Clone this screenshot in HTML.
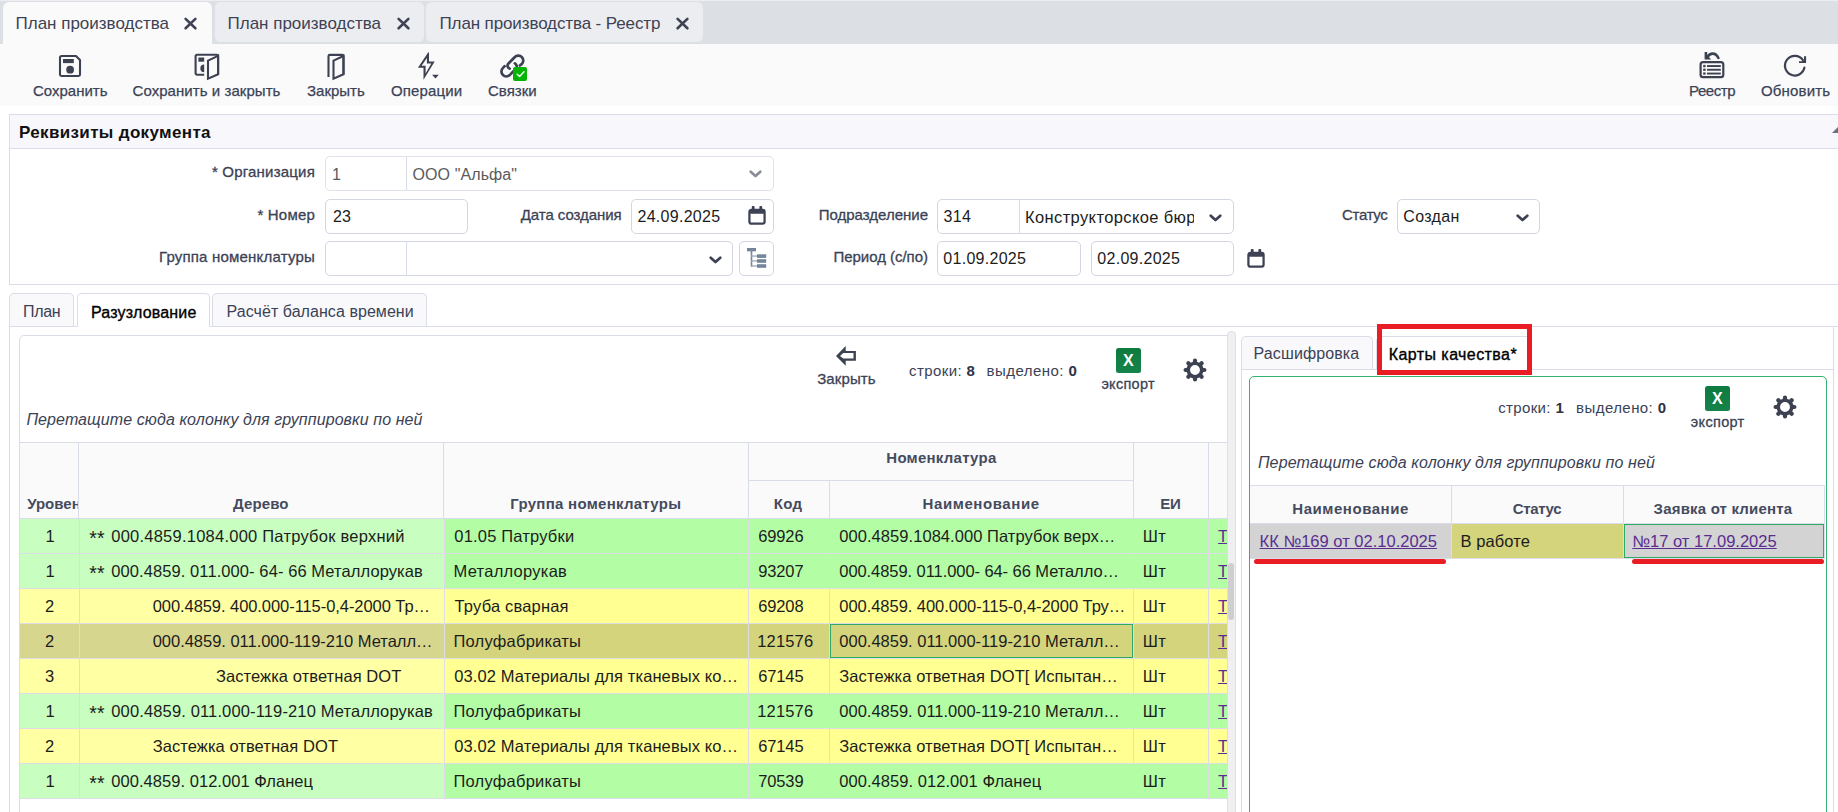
<!DOCTYPE html>
<html lang="ru">
<head>
<meta charset="utf-8">
<title>План производства</title>
<style>
*{box-sizing:border-box;margin:0;padding:0}
html,body{width:1838px;height:812px;overflow:hidden;background:#fff}
body{position:relative;font-family:"Liberation Sans",sans-serif;color:#3b4255;font-size:15px;-webkit-font-smoothing:antialiased}
.abs{position:absolute}
svg{display:block;position:absolute;overflow:visible}

/* ---------- top tab bar ---------- */
#tabbar{position:absolute;left:0;top:0;width:1838px;height:44px;background:#dcdfe4;border-top:1px solid #eceef1}
.wtab{position:absolute;top:1px;height:39.8px;background:#ecedf1;border-radius:5.5px;font-size:17px;line-height:20px;color:#3e4254;white-space:nowrap}
.wtab.active{background:#fafafa;height:43px;border-radius:6px 6px 0 0}
.wtab span{position:absolute;top:12px}
.wtab svg{top:15px}

/* ---------- toolbar ---------- */
#toolbar{position:absolute;left:0;top:44px;width:1838px;height:61.5px;background:#fafafa}
.tbtn{position:absolute;top:0;height:61px;text-align:center;white-space:nowrap}
.tbtn .lbl{position:absolute;left:0;top:38px;font-size:15px;line-height:18px;color:#3b4255;-webkit-text-stroke:.25px #3b4255}

/* ---------- requisites panel ---------- */
#req{position:absolute;left:9px;top:114px;width:1840px;height:171px;border:1px solid #d9dce9;background:#fff}
#req .hd{position:absolute;left:0;top:0;width:100%;height:34px;background:#f8f8fc;border-bottom:1px solid #d9dce9}
#req .hd b{position:absolute;left:9px;top:8px;font-size:17px;line-height:20px;color:#111;letter-spacing:.35px}
.flabel{position:absolute;font-size:15px;line-height:18px;color:#3b4255;text-align:right;white-space:nowrap;-webkit-text-stroke:.3px #3b4255;letter-spacing:.2px}
.inp{position:absolute;height:35px;border:1px solid #d3d6e4;border-radius:5px;background:#fff;font-size:16px;line-height:20px;color:#1c1c1c;white-space:nowrap;overflow:hidden}
.inp.dis{border-color:#e0e2ec;color:#5a5a5a}
.inp .t{position:absolute;top:7px}
.inp .dv{position:absolute;top:0;width:1px;height:100%;background:#d9dce9}

/* ---------- sub tabs ---------- */
.stab{position:absolute;height:33px;border:1px solid #d9dce9;border-bottom:none;border-radius:5px 5px 0 0;background:#f9f9fb;font-size:16px;line-height:20px;color:#3b4255;white-space:nowrap}
.stab.active{background:#fff;color:#000;height:34px;-webkit-text-stroke:.35px #000}
.stab span{position:absolute;top:8px}

/* ---------- grids ---------- */
.gridpanel{position:absolute;border:1px solid #d9dce9;border-radius:5px;background:#fff}
.drag{position:absolute;font-style:italic;font-size:16px;line-height:20px;color:#3b4255;white-space:nowrap}
.cnt{position:absolute;font-size:15px;line-height:18px;color:#3b4255;white-space:nowrap}
.cnt b{color:#2d3345}
.small-lbl{position:absolute;font-size:15px;line-height:18px;color:#3b4255;white-space:nowrap;-webkit-text-stroke:.3px #3b4255}
.xl{position:absolute;width:25px;height:25px;border-radius:2.5px;background:linear-gradient(#0f7a40,#15844a);color:#fff;font-weight:700;font-size:16px;line-height:25px;text-align:center}
.th{position:absolute;background:#fafafa;border-right:1px solid #d9dce9;border-top:1px solid #d9dce9;border-bottom:1px solid #d9dce9;font-size:15px;line-height:18px;font-weight:700;color:#454b5e;white-space:nowrap;overflow:hidden}
.th span{position:absolute;left:0}
.row{position:absolute;left:0;height:35px;font-size:16.5px;line-height:20px;color:#1c1c1c;white-space:nowrap}
.c{position:absolute;top:0;height:35px;border-right:1px solid #dcdde6;border-bottom:1px solid #dcdde6;overflow:hidden}
.c span{position:absolute;top:7px;left:0}
.focus{position:absolute;left:0;top:0;right:0;bottom:0;border:1px solid #2fa968}
.g .c{background:#b3fda5}.g .c.f{background:#c8febf}
.y .c{background:#ffff92}.y .c.f{background:#ffffa3}
.s .c{background:#d4d47d}.s .c.f{background:#d7d68f}
a{color:#5a2d91;text-decoration:underline}
</style>
</head>
<body>

<!-- ================= window tabs ================= -->
<div id="tabbar">
  <div class="wtab active" style="left:3px;width:209px"><span style="left:12.5px">План производства</span>
    <svg style="left:181px" width="13" height="13" viewBox="0 0 13 13"><path d="M1.6 1.9 L11.4 11.3 M11.4 1.9 L1.6 11.3" stroke="#3e4254" stroke-width="2.6" stroke-linecap="round"/></svg></div>
  <div class="wtab" style="left:214.5px;width:209px"><span style="left:13px">План производства</span>
    <svg style="left:182.6px" width="13" height="13" viewBox="0 0 13 13"><path d="M1.6 1.9 L11.4 11.3 M11.4 1.9 L1.6 11.3" stroke="#3e4254" stroke-width="2.6" stroke-linecap="round"/></svg></div>
  <div class="wtab" style="left:426px;width:277px"><span style="left:13.5px;letter-spacing:-.12px">План производства - Реестр</span>
    <svg style="left:250.2px" width="13" height="13" viewBox="0 0 13 13"><path d="M1.6 1.9 L11.4 11.3 M11.4 1.9 L1.6 11.3" stroke="#3e4254" stroke-width="2.6" stroke-linecap="round"/></svg></div>
</div>

<!-- ================= toolbar ================= -->
<div id="toolbar">
  <div class="tbtn" style="left:33px;width:74px"><svg style="left:26px;top:11px" width="22" height="22" viewBox="0 0 22 22"><path d="M2.4 1 H17 L21 5 V19.6 a1.4 1.4 0 0 1 -1.4 1.4 H2.4 a1.4 1.4 0 0 1 -1.4 -1.4 V2.4 a1.4 1.4 0 0 1 1.4 -1.4 Z" fill="none" stroke="#3d4252" stroke-width="2.1" stroke-linejoin="round"/><rect x="4" y="4" width="10.8" height="4.1" fill="#3d4252"/><circle cx="11.1" cy="14.7" r="3.9" fill="#3d4252"/></svg><span class="lbl">Сохранить</span></div>
  <div class="tbtn" style="left:132.5px;width:148px"><svg style="left:61.5px;top:9px" width="27" height="27" viewBox="0 0 27 27"><path d="M10.2 21.7 H3 a1.4 1.4 0 0 1 -1.4 -1.4 V3.2 a1.4 1.4 0 0 1 1.4 -1.4 H22.7 a1.4 1.4 0 0 1 1.4 1.4 V21.2" fill="none" stroke="#3d4252" stroke-width="2.1"/><path d="M14 7.6 L24.1 2.9 V21.2 L14 25.6 Z" fill="none" stroke="#3d4252" stroke-width="2.1" stroke-linejoin="miter"/><rect x="4.4" y="4.5" width="5.8" height="4.2" fill="#3d4252"/><path d="M10.2 11.4 A3.9 3.9 0 0 0 10.2 19.2 Z" fill="#3d4252"/></svg><span class="lbl" style="letter-spacing:.06px">Сохранить и закрыть</span></div>
  <div class="tbtn" style="left:307px;width:58px"><svg style="left:19px;top:9px" width="20" height="27" viewBox="0 0 20 27"><path d="M2.5 24 V3.3 a1.4 1.4 0 0 1 1.4 -1.4 H16.1 a1.4 1.4 0 0 1 1.4 1.4 V21.2" fill="none" stroke="#3d4252" stroke-width="2.1"/><path d="M7.5 7.6 L17.5 3 V21.2 L7.5 25.6 Z" fill="none" stroke="#3d4252" stroke-width="2.1"/></svg><span class="lbl">Закрыть</span></div>
  <div class="tbtn" style="left:391px;width:70px"><svg style="left:26px;top:8px" width="23" height="29" viewBox="0 0 23 29"><path fill-rule="evenodd" fill="#3d4252" d="M11.3 0.2 L12 0.4 V9.6 H17.7 L6.5 27.8 V15.8 H0.9 Z M9.9 6 V11.6 H14.3 L8.6 21.4 V13.8 H4.6 Z"/><path d="M15.1 22.8 H21.8 L18.45 26.6 Z" fill="#3d4252"/></svg><span class="lbl" style="letter-spacing:.12px">Операции</span></div>
  <div class="tbtn" style="left:488px;width:48px"><svg style="left:0;top:0" width="48" height="40" viewBox="488 44 48 40"><g fill="none" stroke="#3d4252" stroke-width="2.9" stroke-linecap="round" transform="translate(512.6 66) scale(.93) translate(-512.6 -66)"><path d="M509.5 68.8 C507 67.5 506.3 65.5 508.2 63.3 L514.5 56.8 C517 54.3 520.5 54.3 522.6 56.5 C524.7 58.8 524.5 62 522.3 64 L520.4 65.5"/><path d="M504 66.2 L502.3 68 C500 70.3 500 73.6 502.2 75.6 C504.4 77.7 507.7 77.6 510 75.3 L516 69 C517.8 67 517.3 64.6 515 63.2"/></g><rect x="513" y="67" width="14" height="14" rx="2" fill="#05b305"/><path d="M517.2 74.2 L519.6 76.5 L524 71.8" fill="none" stroke="#eafbe8" stroke-width="1.5" stroke-linecap="round" stroke-linejoin="round"/></svg><span class="lbl">Связки</span></div>
  <div class="tbtn" style="left:1689px;width:46px"><svg style="left:10px;top:7px" width="26" height="28" viewBox="0 0 26 28"><rect x="1.6" y="11.2" width="22.7" height="15" rx="2.5" fill="none" stroke="#3d4252" stroke-width="2.2"/><g fill="#3d4252"><rect x="8" y="14.1" width="13.8" height="1.9"/><rect x="8" y="17.8" width="13.8" height="1.9"/><rect x="8" y="21.6" width="13.8" height="1.9"/><rect x="4.2" y="13.9" width="2.4" height="2.3"/><rect x="4.2" y="17.6" width="2.4" height="2.3"/><rect x="4.2" y="21.4" width="2.4" height="2.3"/><path d="M5.6 1 H8.2 V4.2 L12.2 8.4 H5.6 Z"/></g><path d="M8.5 5.8 C11 1.8 16.5 1 19.4 7" fill="none" stroke="#3d4252" stroke-width="2.6" stroke-linecap="round"/></svg><span class="lbl" style="letter-spacing:-.43px">Реестр</span></div>
  <div class="tbtn" style="left:1761px;width:69px"><svg style="left:22px;top:9px" width="25" height="25" viewBox="0 0 25 25"><path d="M19.76 6.98 A9.8 9.8 0 1 0 21.42 14.57" fill="none" stroke="#3d4252" stroke-width="2.2" stroke-linecap="round"/><path d="M23.1 3.2 V10 H16 V8.2 H19.3 L21 6.5 V3.2 Z" fill="#3d4252"/></svg><span class="lbl" style="letter-spacing:.17px">Обновить</span></div>
</div>

<!-- ================= requisites ================= -->
<div id="req">
  <div class="hd"><b>Реквизиты документа</b></div>
  <svg style="left:1821.5px;top:10.5px" width="7" height="7" viewBox="0 0 7 7"><path d="M7 0V7H0Z" fill="#6b6f7b"/></svg>

  <div class="flabel" style="right:1533px;top:48px">* Организация</div>
  <div class="inp dis" style="left:315px;top:41px;width:449px"><span class="t" style="left:6px;top:8px">1</span><i class="dv" style="left:80px"></i><span class="t" style="left:86.5px;top:8px;letter-spacing:.1px">ООО "Альфа"</span>
    <svg style="left:423px;top:12.5px" width="13" height="8" viewBox="0 0 13 8"><path d="M1.7 1.7L6.5 6.1L11.3 1.7" fill="none" stroke="#8a8d97" stroke-width="2.7" stroke-linecap="round" stroke-linejoin="round"/></svg></div>

  <div class="flabel" style="right:1533px;top:90.5px">* Номер</div>
  <div class="inp" style="left:315px;top:84px;width:143px"><span class="t" style="left:7px">23</span></div>
  <div class="flabel" style="right:1226.5px;top:91px;letter-spacing:-.07px">Дата создания</div>
  <div class="inp" style="left:621px;top:84px;width:143px"><span class="t" style="left:5.5px;letter-spacing:.28px">24.09.2025</span>
    <svg style="left:116px;top:6px" width="18" height="19.2" viewBox="0 0 19 20"><rect x="1.5" y="4" width="16" height="14.5" rx="2" fill="none" stroke="#3e4254" stroke-width="2.4"/><rect x="1.5" y="3" width="16" height="5" rx="1.5" fill="#3e4254"/><rect x="4" y="0" width="3" height="5" rx="1" fill="#3e4254"/><rect x="12" y="0" width="3" height="5" rx="1" fill="#3e4254"/></svg></div>

  <div class="flabel" style="right:1533px;top:132.5px">Группа номенклатуры</div>
  <div class="inp" style="left:315px;top:126px;width:408px"><i class="dv" style="left:80px"></i>
    <svg style="left:383px;top:13.5px" width="13" height="8" viewBox="0 0 13 8"><path d="M1.7 1.7L6.5 6.1L11.3 1.7" fill="none" stroke="#3e4254" stroke-width="2.7" stroke-linecap="round" stroke-linejoin="round"/></svg></div>
  <div class="inp" style="left:729px;top:126px;width:35px">
    <svg style="left:7px;top:6px" width="20" height="21" viewBox="0 0 20 21"><g fill="#74859a"><rect x="0" y="0" width="9" height="3.3"/><rect x="3.7" y="3" width="1.6" height="15.8"/><rect x="4" y="7.4" width="7" height="1.3" fill="#9aa7b7"/><rect x="4" y="12.3" width="7" height="1.3" fill="#9aa7b7"/><rect x="4" y="17.3" width="7" height="1.3" fill="#9aa7b7"/><rect x="10" y="6.3" width="9.2" height="3.6"/><rect x="10" y="11.2" width="9.2" height="3.6"/><rect x="10" y="16.2" width="9.2" height="3.6"/></g></svg></div>

  <div class="flabel" style="right:920px;top:91px;letter-spacing:0">Подразделение</div>
  <div class="inp" style="left:927px;top:84px;width:297px"><span class="t" style="left:5.5px;letter-spacing:.4px">314</span><i class="dv" style="left:81px"></i><span class="t" style="left:87px;top:6.5px;width:168.5px;overflow:hidden;font-size:16.5px;letter-spacing:.38px">Конструкторское бюро</span>
    <svg style="left:270.5px;top:13.5px" width="13" height="8" viewBox="0 0 13 8"><path d="M1.7 1.7L6.5 6.1L11.3 1.7" fill="none" stroke="#3e4254" stroke-width="2.7" stroke-linecap="round" stroke-linejoin="round"/></svg></div>
  <div class="flabel" style="right:460.5px;top:91px;letter-spacing:-.34px">Статус</div>
  <div class="inp" style="left:1387px;top:84px;width:143px"><span class="t" style="left:5.3px;letter-spacing:.33px">Создан</span>
    <svg style="left:118px;top:13.5px" width="13" height="8" viewBox="0 0 13 8"><path d="M1.7 1.7L6.5 6.1L11.3 1.7" fill="none" stroke="#3e4254" stroke-width="2.7" stroke-linecap="round" stroke-linejoin="round"/></svg></div>

  <div class="flabel" style="right:920px;top:133px;letter-spacing:-.03px">Период (с/по)</div>
  <div class="inp" style="left:927px;top:126px;width:144px"><span class="t" style="left:5.3px;letter-spacing:.28px">01.09.2025</span></div>
  <div class="inp" style="left:1081px;top:126px;width:143px"><span class="t" style="left:5.3px;letter-spacing:.28px">02.09.2025</span></div>
  <svg style="left:1236.5px;top:134.2px" width="18" height="19.2" viewBox="0 0 19 20"><rect x="1.5" y="4" width="16" height="14.5" rx="2" fill="none" stroke="#3e4254" stroke-width="2.4"/><rect x="1.5" y="3" width="16" height="5" rx="1.5" fill="#3e4254"/><rect x="4" y="0" width="3" height="5" rx="1" fill="#3e4254"/><rect x="12" y="0" width="3" height="5" rx="1" fill="#3e4254"/></svg>
</div>

<!-- ================= sub tabs ================= -->
<div class="abs" style="left:9px;top:326px;width:1840px;height:500px;border-top:1px solid #d9dce9;border-left:1px solid #d9dce9"></div>
<div class="stab" style="left:9px;top:293px;width:65px"><span style="left:13px;letter-spacing:-.3px">План</span></div>
<div class="stab active" style="left:77px;top:293px;width:133px"><span style="left:13px;top:9.3px;letter-spacing:.17px">Разузлование</span></div>
<div class="stab" style="left:212px;top:293px;width:215px"><span style="left:13.5px;letter-spacing:.06px">Расчёт баланса времени</span></div>

<!-- ================= left grid ================= -->
<!-- LGRID-START -->
<div class="gridpanel" id="lgrid" style="left:19px;top:335px;width:1209px;height:500px;border-radius:5px 0 0 0">
 <svg style="left:815px;top:9px" width="22" height="22" viewBox="0 0 22 22"><path fill-rule="evenodd" fill="#3d4252" d="M1 11 L10.7 1 V5.9 H20.9 V15.8 H10.7 V20.7 Z M5 11 L8.3 8.1 H18.5 V13.6 H8.3 Z"/></svg>
 <div class="small-lbl" style="letter-spacing:0.107px;margin-left:0.20px;left:797px;top:34px">Закрыть</div>
 <div class="cnt" style="letter-spacing:0.409px;margin-left:0.00px;left:889px;top:26px">строки: <b>8</b></div>
 <div class="cnt" style="letter-spacing:0.470px;margin-left:-0.50px;left:967px;top:26px">выделено: <b>0</b></div>
 <div class="xl" style="left:1095.8px;top:11.9px">X</div>
 <div class="small-lbl" style="letter-spacing:0.297px;margin-left:-0.10px;left:1081.5px;top:38.6px;font-size:14.5px">экспорт</div>
 <svg style="left:1162.8px;top:21.8px" width="24" height="24" viewBox="0 0 24 24"><circle cx="12" cy="12" r="6.75" fill="none" stroke="#3d4252" stroke-width="3.6"/><path d="M20.00 12.00L21.40 12.00M17.66 17.66L18.65 18.65M12.00 20.00L12.00 21.40M6.34 17.66L5.35 18.65M4.00 12.00L2.60 12.00M6.34 6.34L5.35 5.35M12.00 4.00L12.00 2.60M17.66 6.34L18.65 5.35" stroke="#3d4252" stroke-width="4.2" stroke-linecap="round" fill="none"/></svg>
 <div class="drag" style="letter-spacing:0.095px;margin-left:0.40px;left:6px;top:74px">Перетащите сюда колонку для группировки по ней</div>
 <div class="th" style="left:0px;top:106px;width:59px;height:77px"><span style="letter-spacing:0.000px;margin-left:7.20px;top:51.5px">Уровень</span></div>
 <div class="th" style="left:59px;top:106px;width:365px;height:77px"><span style="letter-spacing:0.112px;margin-left:154.00px;top:51.5px">Дерево</span></div>
 <div class="th" style="left:424px;top:106px;width:305px;height:77px"><span style="letter-spacing:0.273px;margin-left:66.30px;top:51.5px">Группа номенклатуры</span></div>
 <div class="th" style="left:729px;top:106px;width:385px;height:39px"><span style="letter-spacing:0.247px;margin-left:137.30px;top:5.5px">Номенклатура</span></div>
 <div class="th" style="left:729px;top:144px;width:81px;height:39px"><span style="letter-spacing:0.240px;margin-left:24.80px;top:13.5px">Код</span></div>
 <div class="th" style="left:810px;top:144px;width:304px;height:39px"><span style="letter-spacing:0.581px;margin-left:92.60px;top:13.5px">Наименование</span></div>
 <div class="th" style="left:1114px;top:106px;width:75px;height:77px"><span style="letter-spacing:-0.205px;margin-left:26.30px;top:51.5px">ЕИ</span></div>
 <div class="th" style="left:1189px;top:106px;width:19px;height:77px"><span style="top:53px"></span></div>
 <div class="row g" style="top:183px">
  <div class="c f" style="left:0px;width:60px"><span style="letter-spacing:0.000px;margin-left:25.40px">1</span></div>
  <div class="c f" style="left:60px;width:365px"><span style="letter-spacing:0.111px;margin-left:9.30px;font-size:19.5px;top:8.5px">**</span><span style="letter-spacing:0.234px;margin-left:31.25px">000.4859.1084.000 Патрубок верхний</span></div>
  <div class="c" style="left:425px;width:304px"><span style="letter-spacing:0.185px;margin-left:9.30px">01.05 Патрубки</span></div>
  <div class="c" style="left:729px;width:81px"><span style="letter-spacing:-0.152px;margin-left:9.30px">69926</span></div>
  <div class="c" style="left:810px;width:304px"><span style="letter-spacing:0.052px;margin-left:9.30px">000.4859.1084.000 Патрубок верх…</span></div>
  <div class="c" style="left:1114px;width:75px"><span style="letter-spacing:0.378px;margin-left:8.80px">Шт</span></div>
  <div class="c" style="left:1189px;width:19px"><span style="letter-spacing:0.000px;margin-left:9.10px"><a>Т</a></span></div>
 </div>
 <div class="row g" style="top:218px">
  <div class="c f" style="left:0px;width:60px"><span style="letter-spacing:0.000px;margin-left:25.40px">1</span></div>
  <div class="c f" style="left:60px;width:365px"><span style="letter-spacing:0.111px;margin-left:9.30px;font-size:19.5px;top:8.5px">**</span><span style="letter-spacing:0.086px;margin-left:31.25px">000.4859. 011.000- 64- 66 Металлорукав</span></div>
  <div class="c" style="left:425px;width:304px"><span style="letter-spacing:0.262px;margin-left:8.50px">Металлорукав</span></div>
  <div class="c" style="left:729px;width:81px"><span style="letter-spacing:-0.152px;margin-left:9.30px">93207</span></div>
  <div class="c" style="left:810px;width:304px"><span style="letter-spacing:-0.072px;margin-left:9.30px">000.4859. 011.000- 64- 66 Металло…</span></div>
  <div class="c" style="left:1114px;width:75px"><span style="letter-spacing:0.378px;margin-left:8.80px">Шт</span></div>
  <div class="c" style="left:1189px;width:19px"><span style="letter-spacing:0.000px;margin-left:9.10px"><a>Т</a></span></div>
 </div>
 <div class="row y" style="top:253px">
  <div class="c f" style="left:0px;width:60px"><span style="letter-spacing:0.000px;margin-left:25.10px">2</span></div>
  <div class="c f" style="left:60px;width:365px"><span style="letter-spacing:-0.066px;margin-left:72.70px">000.4859. 400.000-115-0,4-2000 Тр…</span></div>
  <div class="c" style="left:425px;width:304px"><span style="letter-spacing:0.185px;margin-left:9.50px">Труба сварная</span></div>
  <div class="c" style="left:729px;width:81px"><span style="letter-spacing:-0.152px;margin-left:9.30px">69208</span></div>
  <div class="c" style="left:810px;width:304px"><span style="letter-spacing:-0.045px;margin-left:9.30px">000.4859. 400.000-115-0,4-2000 Тру…</span></div>
  <div class="c" style="left:1114px;width:75px"><span style="letter-spacing:0.378px;margin-left:8.80px">Шт</span></div>
  <div class="c" style="left:1189px;width:19px"><span style="letter-spacing:0.000px;margin-left:9.10px"><a>Т</a></span></div>
 </div>
 <div class="row s" style="top:288px">
  <div class="c f" style="left:0px;width:60px"><span style="letter-spacing:0.000px;margin-left:25.10px">2</span></div>
  <div class="c f" style="left:60px;width:365px"><span style="letter-spacing:-0.027px;margin-left:72.70px">000.4859. 011.000-119-210 Металл…</span></div>
  <div class="c" style="left:425px;width:304px"><span style="letter-spacing:0.224px;margin-left:8.50px">Полуфабрикаты</span></div>
  <div class="c" style="left:729px;width:81px"><span style="letter-spacing:0.143px;margin-left:8.30px">121576</span></div>
  <div class="c" style="left:810px;width:304px"><span style="letter-spacing:-0.006px;margin-left:9.30px">000.4859. 011.000-119-210 Металл…</span><i class="focus"></i></div>
  <div class="c" style="left:1114px;width:75px"><span style="letter-spacing:0.378px;margin-left:8.80px">Шт</span></div>
  <div class="c" style="left:1189px;width:19px"><span style="letter-spacing:0.000px;margin-left:9.10px"><a>Т</a></span></div>
 </div>
 <div class="row y" style="top:323px">
  <div class="c f" style="left:0px;width:60px"><span style="letter-spacing:0.000px;margin-left:25.10px">3</span></div>
  <div class="c f" style="left:60px;width:365px"><span style="letter-spacing:0.068px;margin-left:136.00px">Застежка ответная DOT</span></div>
  <div class="c" style="left:425px;width:304px"><span style="letter-spacing:0.096px;margin-left:9.30px">03.02 Материалы для тканевых ко…</span></div>
  <div class="c" style="left:729px;width:81px"><span style="letter-spacing:-0.152px;margin-left:9.30px">67145</span></div>
  <div class="c" style="left:810px;width:304px"><span style="letter-spacing:0.079px;margin-left:9.30px">Застежка ответная DOT[ Испытан…</span></div>
  <div class="c" style="left:1114px;width:75px"><span style="letter-spacing:0.378px;margin-left:8.80px">Шт</span></div>
  <div class="c" style="left:1189px;width:19px"><span style="letter-spacing:0.000px;margin-left:9.10px"><a>Т</a></span></div>
 </div>
 <div class="row g" style="top:358px">
  <div class="c f" style="left:0px;width:60px"><span style="letter-spacing:0.000px;margin-left:25.40px">1</span></div>
  <div class="c f" style="left:60px;width:365px"><span style="letter-spacing:0.111px;margin-left:9.30px;font-size:19.5px;top:8.5px">**</span><span style="letter-spacing:0.141px;margin-left:31.25px">000.4859. 011.000-119-210 Металлорукав</span></div>
  <div class="c" style="left:425px;width:304px"><span style="letter-spacing:0.224px;margin-left:8.50px">Полуфабрикаты</span></div>
  <div class="c" style="left:729px;width:81px"><span style="letter-spacing:0.143px;margin-left:8.30px">121576</span></div>
  <div class="c" style="left:810px;width:304px"><span style="letter-spacing:-0.006px;margin-left:9.30px">000.4859. 011.000-119-210 Металл…</span></div>
  <div class="c" style="left:1114px;width:75px"><span style="letter-spacing:0.378px;margin-left:8.80px">Шт</span></div>
  <div class="c" style="left:1189px;width:19px"><span style="letter-spacing:0.000px;margin-left:9.10px"><a>Т</a></span></div>
 </div>
 <div class="row y" style="top:393px">
  <div class="c f" style="left:0px;width:60px"><span style="letter-spacing:0.000px;margin-left:25.10px">2</span></div>
  <div class="c f" style="left:60px;width:365px"><span style="letter-spacing:0.068px;margin-left:72.70px">Застежка ответная DOT</span></div>
  <div class="c" style="left:425px;width:304px"><span style="letter-spacing:0.096px;margin-left:9.30px">03.02 Материалы для тканевых ко…</span></div>
  <div class="c" style="left:729px;width:81px"><span style="letter-spacing:-0.152px;margin-left:9.30px">67145</span></div>
  <div class="c" style="left:810px;width:304px"><span style="letter-spacing:0.079px;margin-left:9.30px">Застежка ответная DOT[ Испытан…</span></div>
  <div class="c" style="left:1114px;width:75px"><span style="letter-spacing:0.378px;margin-left:8.80px">Шт</span></div>
  <div class="c" style="left:1189px;width:19px"><span style="letter-spacing:0.000px;margin-left:9.10px"><a>Т</a></span></div>
 </div>
 <div class="row g" style="top:428px">
  <div class="c f" style="left:0px;width:60px"><span style="letter-spacing:0.000px;margin-left:25.40px">1</span></div>
  <div class="c f" style="left:60px;width:365px"><span style="letter-spacing:0.111px;margin-left:9.30px;font-size:19.5px;top:8.5px">**</span><span style="letter-spacing:0.045px;margin-left:31.25px">000.4859. 012.001 Фланец</span></div>
  <div class="c" style="left:425px;width:304px"><span style="letter-spacing:0.224px;margin-left:8.50px">Полуфабрикаты</span></div>
  <div class="c" style="left:729px;width:81px"><span style="letter-spacing:-0.152px;margin-left:9.30px">70539</span></div>
  <div class="c" style="left:810px;width:304px"><span style="letter-spacing:0.048px;margin-left:9.30px">000.4859. 012.001 Фланец</span></div>
  <div class="c" style="left:1114px;width:75px"><span style="letter-spacing:0.378px;margin-left:8.80px">Шт</span></div>
  <div class="c" style="left:1189px;width:19px"><span style="letter-spacing:0.000px;margin-left:9.10px"><a>Т</a></span></div>
 </div>
</div>
<div class="abs" style="left:1227px;top:331px;width:8.5px;height:500px;border-radius:4px 4px 0 0;background:#f0f0f2;border:1px solid #dcdfea;border-right-width:1.5px"></div>
<div class="abs" style="left:1228.3px;top:563px;width:5.8px;height:57px;border-radius:3px;background:#cfcfd2"></div>
<!-- LGRID-END -->
<!-- ================= right panel ================= -->
<!-- RGRID-START -->
<div class="abs" style="left:1241px;top:369px;width:593px;height:460px;border:1px solid #d9dce9;border-bottom:none"></div>
<div class="abs" style="left:1833px;top:327px;width:1px;height:43px;background:#d9dce9"></div>
<div class="stab" style="left:1241px;top:336px;width:132px"><span style="letter-spacing:0.108px;margin-left:11.60px;top:6.5px">Расшифровка</span></div>
<div class="stab active" style="left:1376px;top:336px;width:155px"><span style="letter-spacing:0.420px;margin-left:11.80px;top:7.8px">Карты качества*</span></div>
<div class="abs" style="left:1377px;top:324px;width:155px;height:51px;border:5px solid #ea1c24"></div>
<div class="gridpanel" id="rgrid" style="left:1249px;top:376px;width:578px;height:460px;border-color:#33b270">
 <div class="cnt" style="letter-spacing:0.359px;margin-left:0.20px;left:248px;top:22px">строки: <b>1</b></div>
 <div class="cnt" style="letter-spacing:0.430px;margin-left:-0.90px;left:327px;top:22px">выделено: <b>0</b></div>
 <div class="xl" style="left:454.9px;top:9px">X</div>
 <div class="small-lbl" style="letter-spacing:0.331px;margin-left:-0.20px;left:441px;top:35.6px;font-size:14.5px">экспорт</div>
 <svg style="left:523px;top:18px" width="24" height="24" viewBox="0 0 24 24"><circle cx="12" cy="12" r="6.75" fill="none" stroke="#3d4252" stroke-width="3.6"/><path d="M20.00 12.00L21.40 12.00M17.66 17.66L18.65 18.65M12.00 20.00L12.00 21.40M6.34 17.66L5.35 18.65M4.00 12.00L2.60 12.00M6.34 6.34L5.35 5.35M12.00 4.00L12.00 2.60M17.66 6.34L18.65 5.35" stroke="#3d4252" stroke-width="4.2" stroke-linecap="round" fill="none"/></svg>
 <div class="drag" style="letter-spacing:0.115px;margin-left:-0.10px;left:8px;top:76px">Перетащите сюда колонку для группировки по ней</div>
 <div class="th" style="left:0px;top:108px;width:202px;height:39px"><span style="letter-spacing:0.545px;margin-left:42.30px;top:13.5px">Наименование</span></div>
 <div class="th" style="left:202px;top:108px;width:172px;height:39px"><span style="letter-spacing:-0.362px;margin-left:60.80px;top:13.5px">Статус</span></div>
 <div class="th" style="left:374px;top:108px;width:201px;height:39px"><span style="letter-spacing:0.186px;margin-left:29.60px;top:13.5px">Заявка от клиента</span></div>
 <div class="row" style="top:147px">
  <div class="c" style="left:0px;width:202px;background:#d3d3d3"><span><a style="letter-spacing:0.011px;margin-left:9.60px">КК №169 от 02.10.2025</a></span></div>
  <div class="c" style="left:202px;width:172px;background:#d4d47d"><span style="letter-spacing:0.117px;margin-left:8.40px">В работе</span></div>
  <div class="c" style="left:374px;width:201px;background:#d3d3d3"><span><a style="letter-spacing:0.013px;margin-left:8.30px">№17 от 17.09.2025</a></span><i class="focus"></i></div>
 </div>
</div>
<div class="abs" style="left:1254px;top:559px;width:192px;height:5px;border-radius:3px;background:#ea1c24"></div>
<div class="abs" style="left:1632px;top:559px;width:192px;height:5px;border-radius:3px;background:#ea1c24"></div>
<!-- RGRID-END -->

</body>
</html>
